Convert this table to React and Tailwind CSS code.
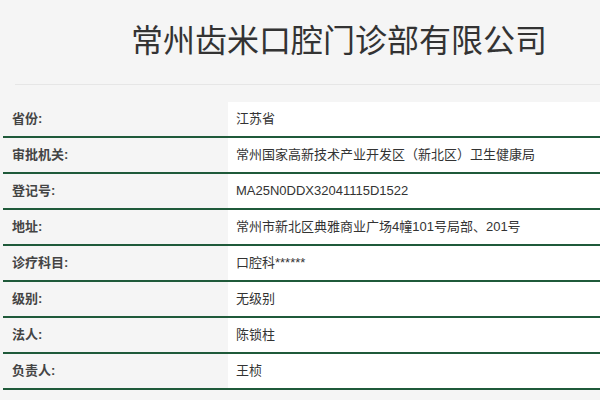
const rows = [
  ["省份:", "江苏省"],
  ["审批机关:", "常州国家高新技术产业开发区（新北区）卫生健康局"],
  ["登记号:", "MA25N0DDX32041115D1522"],
  ["地址:", "常州市新北区典雅商业广场4幢101号局部、201号"],
  ["诊疗科目:", "口腔科******"],
  ["级别:", "无级别"],
  ["法人:", "陈锁柱"],
  ["负责人:", "王桢"],
]

export default function App() {
  return (
    <div
      className="w-[600px] h-[400px] overflow-hidden bg-[#f5f5f5] text-[#333]"
      style={{ fontFamily: '"Liberation Sans", "Noto Sans CJK SC", sans-serif' }}
    >
      {/* title */}
      <div className="h-[84px] flex items-center pl-[131px] pb-[2px]">
        <h1 className="text-[32px] leading-[40px] text-[#333]">
          常州齿米口腔门诊部有限公司
        </h1>
      </div>
      <div className="ml-[15px] border-t border-[#e6e6e6]"></div>

      {/* info table */}
      <div className="mt-[17px] ml-[3px]">
        {rows.map(([label, value]) => (
          <div key={label} className="flex h-[36px] border-b-2 border-[#1f5a3a]">
            <div className="w-[225px] flex items-center pl-[9px] text-[13px] font-bold text-[#444]">
              {label}
            </div>
            <div className="flex-1 bg-white flex items-center pl-[8px] text-[13px] text-[#333]">
              {value}
            </div>
          </div>
        ))}
      </div>
    </div>
  )
}
